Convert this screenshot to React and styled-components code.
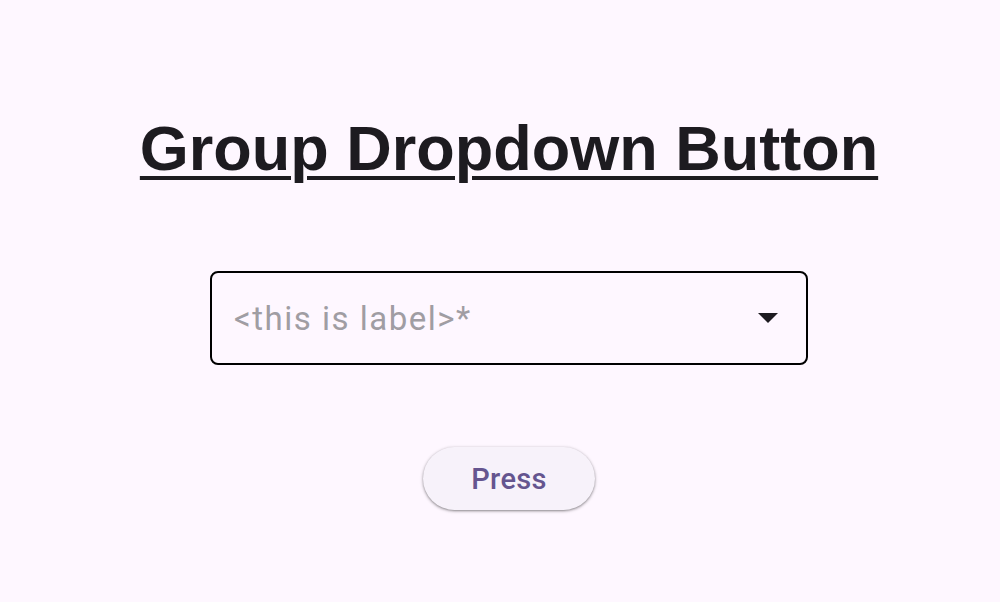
import React, { useState } from "react";
import styled, { createGlobalStyle } from "styled-components";

const GlobalStyle = createGlobalStyle`
  html, body {
    margin: 0;
    padding: 0;
    background: #fef7ff;
  }
`;

const Page = styled.div`
  width: 1000px;
  height: 602px;
  background: #fef7ff;
  display: flex;
  flex-direction: column;
  align-items: center;
  padding: 112px 0 0 18px;
  box-sizing: border-box;
`;

const Title = styled.h1`
  margin: 0;
  font-family: "Liberation Sans", Arial, sans-serif;
  font-weight: 700;
  font-size: 63px;
  line-height: 72px;
  color: #1d1b20;
  text-decoration: underline;
  text-decoration-thickness: 4px;
  text-underline-offset: 6px;
`;

const Field = styled.div`
  margin-top: 87px;
  width: 598px;
  height: 94px;
  box-sizing: border-box;
  border: 2px solid #000;
  border-radius: 8px;
  display: flex;
  align-items: center;
  justify-content: space-between;
  padding: 0 28px 0 22px;
  cursor: pointer;
`;

const Hint = styled.span`
  font-family: Roboto, "Noto Sans", sans-serif;
  font-size: 33px;
  letter-spacing: 1.5px;
  color: #a09da3;
`;

const Arrow = styled.svg`
  width: 20px;
  height: 10px;
  fill: #1d1b20;
`;

const PressButton = styled.button`
  margin-top: 82px;
  width: 172px;
  height: 63px;
  border: none;
  border-radius: 32px;
  background: #f7f2fa;
  box-shadow: 0 1px 2px rgba(0, 0, 0, 0.3), 0 1px 3px 1px rgba(0, 0, 0, 0.15);
  font-family: Roboto, "Noto Sans", sans-serif;
  font-weight: 500;
  font-size: 29px;
  letter-spacing: 0.3px;
  color: #65558f;
  cursor: pointer;
`;

const App = () => {
  const [count, setCount] = useState(0);

  return (
    <>
      <GlobalStyle />
      <Page>
        <Title>Group Dropdown Button</Title>
        <Field>
          <Hint>&lt;this is label&gt;*</Hint>
          <Arrow viewBox="0 0 20 10">
            <path d="M0 0h20L10 10z" />
          </Arrow>
        </Field>
        <PressButton onClick={() => setCount(count + 1)}>Press</PressButton>
      </Page>
    </>
  );
};

export default App;
